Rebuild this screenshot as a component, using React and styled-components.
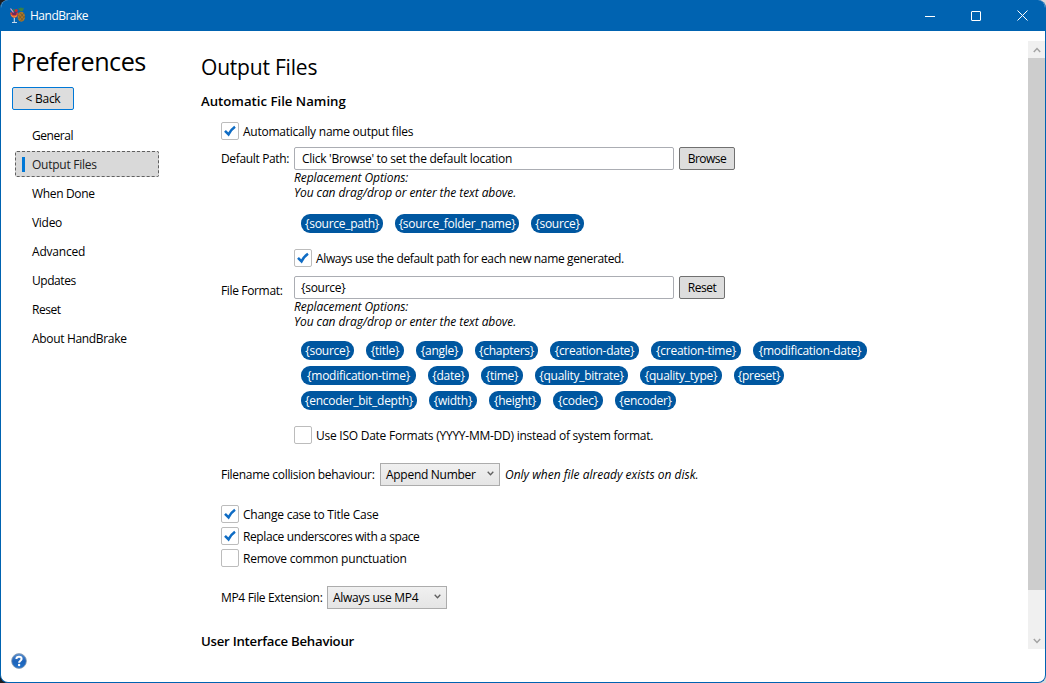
import React from 'react';
import styled, { createGlobalStyle, css } from 'styled-components';

const Global = createGlobalStyle`
  * { box-sizing: border-box; }
  body {
    margin: 0;
    background: linear-gradient(90deg, #1d1d1f 0 50%, #dcd6d8 50%);
    font-family: "Open Sans", "Noto Sans", sans-serif;
    font-size: 12px;
    color: #000;
    overflow: hidden;
  }
`;

const tracking = css`
  letter-spacing: ${(p) => p.$track ?? -0.28}px;
`;

const Window = styled.div`
  width: 1046px;
  height: 683px;
  display: flex;
  flex-direction: column;
  background: #fff;
  border: 1px solid #0063b1;
  border-top: 0;
  border-radius: 8px;
  overflow: hidden;
`;

const TitleBar = styled.header`
  height: 31px;
  flex: none;
  display: flex;
  align-items: center;
  background: #0063b1;
  color: #fff;
  padding-left: 8px;
`;

const AppName = styled.span`
  flex: 1;
  margin-left: 4px;
  ${tracking}
`;

const WindowButton = styled.button`
  width: 46px;
  height: 31px;
  padding: 0;
  border: 0;
  background: none;
  display: grid;
  place-items: center;
`;

const Body = styled.div`
  flex: 1;
  min-height: 0;
  display: flex;
`;

const Sidebar = styled.aside`
  width: 200px;
  display: flex;
  flex-direction: column;
  align-items: flex-start;
  padding: 13px 0 13px 10px;
`;

const PageTitle = styled.h1`
  margin: 0;
  height: 34px;
  line-height: 34px;
  font-size: 25.2px;
  font-weight: 400;
  white-space: nowrap;
  ${tracking}
`;

const Button = styled.button`
  width: ${(p) => p.$w}px;
  height: 23px;
  padding: 0;
  font: inherit;
  color: #000;
  line-height: 21px;
  white-space: nowrap;
  background: #ddd;
  border: 1px solid ${(p) => (p.$focus ? '#0078d7' : '#707070')};
  border-radius: 2px;
  ${tracking}
`;

const BackButton = styled(Button)`
  margin: 9px 0 0 1px;
`;

const Nav = styled.nav`
  display: flex;
  flex-direction: column;
  gap: 3px;
  margin: 12px 0 0 4px;
`;

const NavItem = styled.a`
  width: 144px;
  height: 26px;
  display: flex;
  align-items: center;
  padding-left: 7px;
  border-radius: 2px;
  white-space: nowrap;
  ${tracking}
  &::before {
    content: "";
    width: 3px;
    height: 15px;
    margin-right: 7px;
  }
  ${(p) => p.$active && css`
    background: #d9d9d9;
    color: #222;
    outline: 1px dashed #606060;
    outline-offset: -1px;
    &::before { background: #0078d7; }
  `}
`;

const HelpButton = styled.button`
  margin-top: auto;
  width: 16px;
  height: 16px;
  padding: 0;
  border: 0;
  background: none;
  display: flex;
`;

const Content = styled.main`
  flex: 1;
  display: flex;
  flex-direction: column;
  padding-top: 23px;
`;

const SubTitle = styled.h2`
  margin: 0;
  height: 26px;
  line-height: 26px;
  font-size: 21px;
  font-weight: 400;
  ${tracking}
`;

const SectionHeading = styled.h3`
  margin: ${(p) => p.$mt}px 0 0;
  height: 18px;
  line-height: 18px;
  font-size: 13.2px;
  font-weight: 600;
  ${tracking}
`;

const Row = styled.div`
  display: flex;
  align-items: center;
  height: ${(p) => p.$h || 23}px;
  margin: ${(p) => p.$mt || 0}px 0 0 ${(p) => (p.$indent ? 93 : 20)}px;
`;

const Label = styled.span`
  width: ${(p) => p.$w}px;
  padding-top: ${(p) => p.$drop || 0}px;
  white-space: nowrap;
  ${tracking}
`;

const TextField = styled.input`
  width: 380px;
  height: 23px;
  margin-right: 5px;
  padding: 0 ${(p) => p.$pad || 7}px;
  font: inherit;
  color: #000;
  border: 1px solid #abadb3;
  border-radius: 2px;
  outline: 0;
  ${tracking}
`;

const Hint = styled.p`
  margin: 0 0 0 93px;
  height: 30px;
  line-height: 15px;
  font-style: italic;
  letter-spacing: -0.08px;
`;

const InlineHint = styled.em`
  margin-left: 5px;
`;

const TokenList = styled.div`
  display: flex;
  flex-direction: column;
  gap: 6px;
  margin: ${(p) => p.$mt}px 0 0 100px;
`;

const TokenRow = styled.div`
  display: flex;
  gap: 12px;
`;

const Token = styled.span`
  width: ${(p) => p.$w}px;
  height: 19px;
  line-height: 19px;
  display: flex;
  justify-content: center;
  white-space: nowrap;
  border-radius: 9px;
  background: #0057a0;
  color: #fff;
  ${tracking}
`;

const Box = styled.span`
  width: 18px;
  height: 18px;
  margin-right: 4px;
  display: grid;
  place-items: center;
  border: 1px solid #bcbcbc;
  border-radius: 2px;
  background: #fff;
`;

const Combo = styled.div`
  width: 120px;
  height: 23px;
  display: flex;
  align-items: center;
  justify-content: space-between;
  padding: 0 5px;
  border: 1px solid #acacac;
  background: linear-gradient(#f0f0f0, #e5e5e5);
  white-space: nowrap;
  ${tracking}
  svg { margin-bottom: 2px; }
`;

const ScrollBar = styled.div`
  width: 17px;
  height: 608px;
  margin-top: 10px;
  display: flex;
  flex-direction: column;
  justify-content: space-between;
  background: #f0f0f0;
`;

const ScrollArrow = styled.div`
  height: 17px;
  display: grid;
  place-items: center;
`;

const ScrollThumb = styled.div`
  height: 532px;
  margin-bottom: auto;
  background: #cdcdcd;
`;

function Chevron({ up, size = 7, color = '#606060', width = 1.5 }) {
  return (
    <svg width={size} height={size} viewBox="0 0 8 8" fill="none" stroke={color} strokeWidth={width}>
      <path d={up ? 'M.8 6 4 2.6 7.2 6' : 'M.8 2 4 5.4 7.2 2'} />
    </svg>
  );
}

function Logo() {
  return (
    <svg width="17" height="17" viewBox="0 0 17 17">
      <path d="m11 4-2-3 2 .6L12 0l1 1.6L15 .5 13.800 4z" fill="#3c8440" />
      <ellipse cx="12.300" cy="9.700" rx="3.700" ry="5" fill="#a8772c" />
      <path d="m9.500 8 4.500 5.500m-3-8 4.500 5.500m-6 1 5.500-6m-3.500 8 4.500-5" stroke="#70552a" strokeWidth=".7" />
      <path d="M1 5.500h8.500c-.5 3.500-2 5-4.200 5.500C3 10.500 1.400 9 1 5.500z" fill="#d8452f" />
      <path d="M2.500 4.500h5.500L7 8H3.500z" fill="#6b2a62" />
      <path d="m1.500 1.500 3 4" stroke="#d9a0c8" strokeWidth="1.200" />
      <path d="m4.500 2 1 2.500" stroke="#3c8440" strokeWidth="1.400" />
      <circle cx="7.300" cy="3.500" r="1.500" fill="#d4262c" />
      <path d="m2.200 8.500 2.800 1.700 3-1.500" stroke="#f2a24a" fill="none" />
      <path d="M5.300 11v4M3 15.500h5" stroke="#c5d8ea" strokeWidth="1.100" />
    </svg>
  );
}

function HelpIcon() {
  return (
    <svg width="16" height="16" viewBox="0 0 16 16" fill="none">
      <defs>
        <linearGradient id="help" x1="0" y1="0" x2="0" y2="1">
          <stop stopColor="#5a91d2" />
          <stop offset=".5" stopColor="#1c62b9" />
          <stop offset="1" stopColor="#2373cb" />
        </linearGradient>
      </defs>
      <circle cx="8" cy="8" r="7.4" fill="url(#help)" stroke="#8c9cb0" strokeWidth=".8" />
      <path d="M5.4 6C5.500 3.100 10.600 3.100 10.600 6c0 1.700-2.500 1.700-2.500 3.700" stroke="#fff" strokeWidth="2" />
      <circle cx="8.100" cy="12" r="1.200" fill="#fff" />
    </svg>
  );
}

function CheckBox({ checked, children, track, ...row }) {
  return (
    <Row $h={18} {...row}>
      <Box>
        {checked && (
          <svg width="16" height="16" viewBox="0 0 16 16" fill="none">
            <path d="M3 7.800 6.500 11.300Q9 6.500 13 3.700" stroke="#0f6cc4" strokeWidth="2.600" />
          </svg>
        )}
      </Box>
      <Label $track={track}>{children}</Label>
    </Row>
  );
}

function Tokens({ rows, mt }) {
  return (
    <TokenList $mt={mt}>
      {rows.map((row, i) => (
        <TokenRow key={i}>
          {row.map(([name, w]) => <Token key={name} $w={w}>{`{${name}}`}</Token>)}
        </TokenRow>
      ))}
    </TokenList>
  );
}

const NAV = [
  ['General', -0.45],
  ['Output Files', -0.25],
  ['When Done', -0.35],
  ['Video', -0.3],
  ['Advanced', -0.2],
  ['Updates', -0.45],
  ['Reset', -0.45],
  ['About HandBrake', -0.33],
];

const PATH_TOKENS = [[['source_path', 82], ['source_folder_name', 124], ['source', 53]]];

const FORMAT_TOKENS = [
  [['source', 53], ['title', 38], ['angle', 47], ['chapters', 63], ['creation-date', 89], ['creation-time', 90], ['modification-date', 114]],
  [['modification-time', 115], ['date', 41], ['time', 42], ['quality_bitrate', 93], ['quality_type', 82], ['preset', 50]],
  [['encoder_bit_depth', 116], ['width', 48], ['height', 52], ['codec', 50], ['encoder', 61]],
];

export default function App() {
  return (
    <>
      <Global />
      <Window>
        <TitleBar>
          <Logo />
          <AppName $track={-0.5}>HandBrake</AppName>
          <WindowButton aria-label="Minimize">
            <svg width="10" height="10"><path d="M0 5.500h10" stroke="#fff" /></svg>
          </WindowButton>
          <WindowButton aria-label="Maximize">
            <svg width="10" height="10"><rect x=".5" y=".5" width="9" height="9" rx=".5" fill="none" stroke="#fff" /></svg>
          </WindowButton>
          <WindowButton aria-label="Close">
            <svg width="11" height="11"><path d="m.5.5 10 10m0-10-10 10" stroke="#fff" /></svg>
          </WindowButton>
        </TitleBar>
        <Body>
          <Sidebar>
            <PageTitle $track={-0.5}>Preferences</PageTitle>
            <BackButton $w={62} $focus>&lt; Back</BackButton>
            <Nav>
              {NAV.map(([name, track]) => (
                <NavItem key={name} $track={track} $active={name === 'Output Files'}>{name}</NavItem>
              ))}
            </Nav>
            <HelpButton aria-label="Help"><HelpIcon /></HelpButton>
          </Sidebar>
          <Content>
            <SubTitle $track={-0.2}>Output Files</SubTitle>
            <SectionHeading $mt={12} $track={0}>Automatic File Naming</SectionHeading>
            <CheckBox checked $mt={12} track={-0.24}>Automatically name output files</CheckBox>
            <Row $mt={7}>
              <Label $w={73} $track={-0.35}>Default Path:</Label>
              <TextField readOnly value="Click 'Browse' to set the default location" />
              <Button $w={56} $track={-0.5}>Browse</Button>
            </Row>
            <Hint>Replacement Options:<br />You can drag/drop or enter the text above.</Hint>
            <Tokens rows={PATH_TOKENS} mt={14} />
            <CheckBox checked $indent $mt={16} track={-0.36}>Always use the default path for each new name generated.</CheckBox>
            <Row $mt={9}>
              <Label $w={73} $drop={6} $track={-0.35}>File Format:</Label>
              <TextField readOnly $pad={6} value="{source}" />
              <Button $w={46} $track={-0.45}>Reset</Button>
            </Row>
            <Hint>Replacement Options:<br />You can drag/drop or enter the text above.</Hint>
            <Tokens rows={FORMAT_TOKENS} mt={12} />
            <CheckBox $indent $mt={16} track={-0.25}>Use ISO Date Formats (YYYY-MM-DD) instead of system format.</CheckBox>
            <Row $mt={19}>
              <Label $w={159} $track={-0.3}>Filename collision behaviour:</Label>
              <Combo>Append Number<Chevron /></Combo>
              <InlineHint>Only when file already exists on disk.</InlineHint>
            </Row>
            <CheckBox checked $mt={19} track={-0.24}>Change case to Title Case</CheckBox>
            <CheckBox checked $mt={4} track={-0.385}>Replace underscores with a space</CheckBox>
            <CheckBox $mt={4} track={-0.22}>Remove common punctuation</CheckBox>
            <Row $mt={19}>
              <Label $w={106} $track={-0.34}>MP4 File Extension:</Label>
              <Combo>Always use MP4<Chevron /></Combo>
            </Row>
            <SectionHeading $mt={23} $track={-0.25}>User Interface Behaviour</SectionHeading>
          </Content>
          <ScrollBar>
            <ScrollArrow><Chevron up size={8} color="#a3a3a3" /></ScrollArrow>
            <ScrollThumb />
            <ScrollArrow><Chevron size={8} color="#a3a3a3" /></ScrollArrow>
          </ScrollBar>
        </Body>
      </Window>
    </>
  );
}
